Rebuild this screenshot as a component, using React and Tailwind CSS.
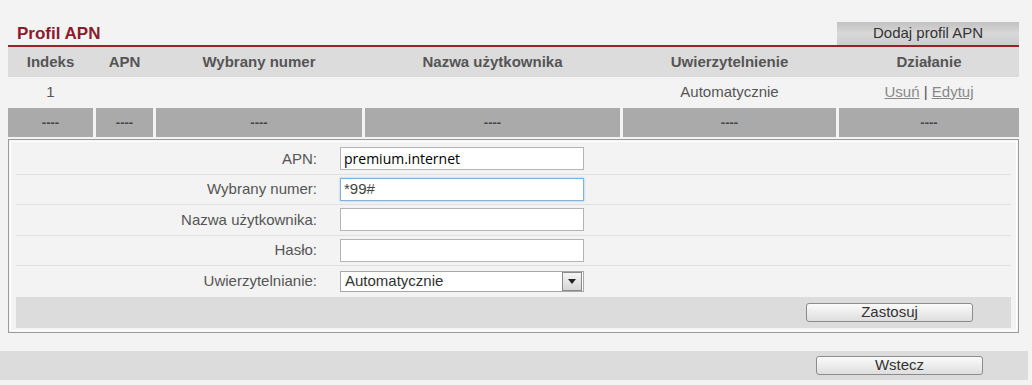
import React from 'react';

const cols = ['w-[85px]', 'w-[57px]', 'w-[206px]', 'w-[255px]', 'w-[213px]', 'w-[180px]'];
const heads = ['Indeks', 'APN', 'Wybrany numer', 'Nazwa użytkownika', 'Uwierzytelnienie', 'Działanie'];

function Field({ label, children, last }) {
  return (
    <div className={`flex items-center h-[30.5px] ${last ? '' : 'border-b border-[#e0e0e0]'}`}>
      <div className="w-[324px] pr-[23px] text-right text-[15px] text-[#555]">{label}</div>
      {children}
    </div>
  );
}

function TextBox({ value, focused, sans }) {
  return (
    <div
      className={`w-[244px] h-[23px] bg-white flex items-center px-[3px] ${
        focused ? 'border border-[#86b0dc] shadow-[0_0_2px_#9cc3ea]' : 'border border-[#b4b4b4]'
      } ${sans ? "font-['Open_Sans',sans-serif] text-[14px] text-black" : 'text-[15px] text-[#444]'}`}
    >
      {value}
    </div>
  );
}

function Btn({ children, className = '' }) {
  return (
    <div
      className={`h-[19px] w-[167px] rounded-[3px] border border-[#8c8c8c] bg-linear-to-b from-[#fbfbfb] to-[#dedede] flex items-center justify-center text-[15px] text-[#333] ${className}`}
    >
      {children}
    </div>
  );
}

export default function App() {
  return (
    <div className="min-h-screen bg-[#f3f3f3] font-['Liberation_Sans',Arial,sans-serif]">
      <div className="pt-[22px] pl-2 w-[1019px]">
        {/* Title + tab */}
        <div className="flex items-end justify-between h-[23px]">
          <div className="pl-[9px] text-[17px] font-bold text-[#8c1c2b] leading-none pb-[3px]">Profil APN</div>
          <div className="w-[182px] h-[23px] bg-linear-to-b from-[#c2c2c2] via-[#d8d8d8] to-[#cdcdcd] flex items-center justify-center text-[15px] text-[#333]">
            Dodaj profil APN
          </div>
        </div>
        <div className="h-[2px] bg-[#a11d27]" />

        {/* Header row */}
        <div className="flex gap-[3px] h-[30px] bg-[#dcdcdc] items-center">
          {heads.map((h, i) => (
            <div key={h} className={`${cols[i]} text-center text-[15px] font-bold text-[#555]`}>{h}</div>
          ))}
        </div>

        {/* Data row */}
        <div className="flex gap-[3px] h-[30px] items-center text-[15px] text-[#555]">
          <div className={`${cols[0]} text-center`}>1</div>
          <div className={cols[1]} />
          <div className={cols[2]} />
          <div className={cols[3]} />
          <div className={`${cols[4]} text-center`}>Automatycznie</div>
          <div className={`${cols[5]} text-center text-[#888]`}>
            <span className="underline">Usuń</span> <span className="text-[#555]">|</span> <span className="underline">Edytuj</span>
          </div>
        </div>

        {/* Empty row */}
        <div className="flex gap-[3px] h-[29px] mt-[1px]">
          {cols.map((c, i) => (
            <div key={i} className={`${c} bg-[#aaaaaa] flex items-center justify-center text-[13px] font-bold text-[#444]`}>
              ----
            </div>
          ))}
        </div>

        {/* Form box */}
        <div className="mt-[2px] border border-[#9c9c9c] p-[1px]">
          <div className="border border-white px-[5px] pt-[2px] pb-[2px]">
            <Field label="APN:">
              <TextBox value="premium.internet" sans />
            </Field>
            <Field label="Wybrany numer:">
              <TextBox value="*99#" focused />
            </Field>
            <Field label="Nazwa użytkownika:">
              <TextBox value="" />
            </Field>
            <Field label="Hasło:">
              <TextBox value="" />
            </Field>
            <Field label="Uwierzytelnianie:" last>
              <div className="w-[244px] h-[21px] bg-white border border-[#a8a8a8] flex items-center">
                <div className="flex-1 px-[4px] text-[15px] text-[#333]">Automatycznie</div>
                <div className="w-[20px] h-[19px] mr-[1px] border border-[#8a8a8a] bg-linear-to-b from-[#f4f4f4] to-[#d6d6d6] flex items-center justify-center">
                  <svg width="8" height="5" viewBox="0 0 8 5">
                    <path d="M0 0h8L4 5z" fill="#222" />
                  </svg>
                </div>
              </div>
            </Field>
            <div className="h-[31px] bg-[#dcdcdc] flex items-center justify-end pr-[38px]">
              <Btn>Zastosuj</Btn>
            </div>
          </div>
        </div>
      </div>

      {/* Footer */}
      <div className="mt-[18px] w-[1028px] h-[29px] bg-[#dcdcdc] flex items-center justify-end pr-[45px]">
        <Btn>Wstecz</Btn>
      </div>
    </div>
  );
}
